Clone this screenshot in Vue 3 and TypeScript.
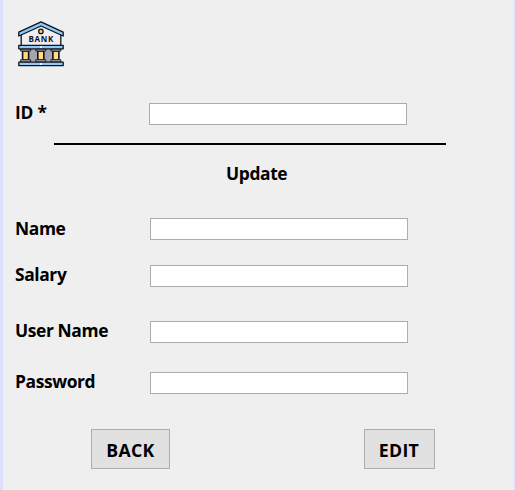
<script setup lang="ts">
import { ref } from 'vue'

interface Field {
  key: string
  label: string
}

const id = ref('')
const fields: Field[] = [
  { key: 'name', label: 'Name' },
  { key: 'salary', label: 'Salary' },
  { key: 'username', label: 'User Name' },
  { key: 'password', label: 'Password' },
]
const values = ref<Record<string, string>>({ name: '', salary: '', username: '', password: '' })
</script>

<template>
  <main class="window">
    <svg class="logo" viewBox="0 0 46 46">
      <g stroke="#10141c" stroke-width="1.3" stroke-linejoin="round">
        <path d="M3.2 12 L23 3.5 L42.8 12 V25 H3.2Z" fill="#eeedf3" />
        <path d="M.8 11.2 L23 .8 L45.2 11.2 V15 L23 5 L.8 15Z" fill="#8fc8fa" />
        <circle cx="22.9" cy="10.4" r="2.2" fill="#f7c964" />
        <path d="M8 28h30v13H8z" fill="#a5a4af" stroke="none" />
        <path d="M4.6 30h6v9h-6zM19.8 30h6v9h-6zM34.9 30h6v9h-6z" fill="#ffdb83" stroke-width="1.6" />
        <path d="M2.6 28h10v2h-10zM17.8 28h10v2h-10zM32.9 28h10v2h-10zM2.6 38.8h10V41h-10zM17.8 38.8h10V41h-10zM32.9 38.8h10V41h-10z" fill="#b9b9c5" stroke-width=".9" />
        <path d="M.8 24.4h44.4v3.4H.8zM.8 41.2h44.4v3.4H.8z" fill="#8fc8fa" />
      </g>
      <path d="M22 26h2M22 43h2" stroke="#eef7ff" stroke-width="2" />
      <text x="22.9" y="21.2" text-anchor="middle" textLength="24.6">BANK</text>
    </svg>

    <label class="row id-row">
      <span class="label id">ID *</span>
      <input v-model="id" type="text" />
    </label>
    <hr />
    <h1>Update</h1>

    <label v-for="field in fields" :key="field.key" class="row" :class="field.key">
      <span class="label">{{ field.label }}</span>
      <input v-model="values[field.key]" type="text" />
    </label>

    <div class="actions">
      <button class="back" type="button">BACK</button>
      <button class="edit" type="button">EDIT</button>
    </div>
  </main>
</template>

<style>
body {
  background: #efefef;
}
</style>

<style scoped>
.window {
  box-sizing: border-box;
  width: 515px;
  height: 490px;
  padding: 21px 0 0 12px;
  overflow: hidden;
  background: #efefef;
  border-left: 3px solid #dedfff;
  border-right: 1px solid #dedfff;
  color: #000;
  font: 700 17.4px/22px "Open Sans", "Noto Sans", sans-serif;
  letter-spacing: -0.38px;
}

.logo {
  display: block;
  width: 46px;
  height: 46px;
  margin-left: 3px;
}

.logo text {
  font: 700 8px "Open Sans", sans-serif;
  letter-spacing: 0;
  fill: #10141c;
}

.row {
  display: flex;
  height: 22px;
}

.label {
  width: 135px;
  line-height: 18px;
  white-space: nowrap;
}

.label.id {
  width: 134px;
  line-height: 19px;
  letter-spacing: -0.2px;
}

.id-row {
  margin-top: 36px;
}

.name {
  margin-top: 34px;
}

.name .label {
  line-height: 20px;
}

.salary {
  margin-top: 25px;
}

.username {
  margin-top: 34px;
}

.password {
  margin-top: 29px;
}

input {
  box-sizing: border-box;
  width: 258px;
  height: 22px;
  margin: 0;
  padding: 1px 3px;
  border: 1px solid #abadb3;
  border-radius: 0;
  background: #fff;
  font: inherit;
  outline: none;
}

hr {
  width: 392px;
  height: 2px;
  margin: 18px 0 0 39px;
  border: 0;
  background: #000;
}

h1 {
  margin: 17px 0 0 211px;
  font: inherit;
}

.actions {
  display: flex;
  gap: 194px;
  margin: 35px 0 0 76px;
}

button {
  box-sizing: border-box;
  height: 40px;
  padding: 1px 0 0;
  border: 1px solid #adadad;
  border-radius: 0;
  background: #e1e1e1;
  color: #000;
  font: inherit;
  font-size: 17.7px;
  letter-spacing: 0.3px;
}

.back {
  width: 79px;
}

.edit {
  width: 71px;
  padding-right: 1px;
}
</style>
